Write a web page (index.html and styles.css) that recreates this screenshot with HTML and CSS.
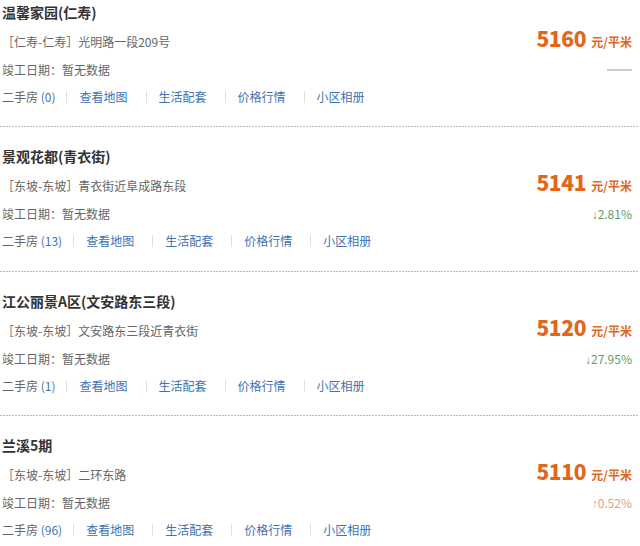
FILE: index.html
```html
<!DOCTYPE html>
<html lang="zh-CN">
<head>
  <meta charset="UTF-8">
  <title>小区列表</title>
  <link rel="stylesheet" href="styles.css">
</head>
<body>
  <div class="list">

    <div class="item">
      <div class="title">温馨家园(仁寿)</div>
      <div class="row addr-row">
        <span class="addr">［仁寿-仁寿］光明路一段209号</span>
        <span class="price"><b>5160</b><em>元/平米</em></span>
      </div>
      <div class="row">
        <span class="date">竣工日期：暂无数据</span>
        <span class="change none"></span>
      </div>
      <div class="links">
        <span class="esf">二手房 <a href="#">(0)</a></span><i class="sep"></i>
        <a href="#">查看地图</a><i class="sep"></i>
        <a href="#">生活配套</a><i class="sep"></i>
        <a href="#">价格行情</a><i class="sep"></i>
        <a href="#">小区相册</a>
      </div>
    </div>

    <div class="item">
      <div class="title">景观花都(青衣街)</div>
      <div class="row addr-row">
        <span class="addr">［东坡-东坡］青衣街近阜成路东段</span>
        <span class="price"><b>5141</b><em>元/平米</em></span>
      </div>
      <div class="row">
        <span class="date">竣工日期：暂无数据</span>
        <span class="change down"><span class="arrow">↓</span>2.81%</span>
      </div>
      <div class="links">
        <span class="esf">二手房 <a href="#">(13)</a></span><i class="sep"></i>
        <a href="#">查看地图</a><i class="sep"></i>
        <a href="#">生活配套</a><i class="sep"></i>
        <a href="#">价格行情</a><i class="sep"></i>
        <a href="#">小区相册</a>
      </div>
    </div>

    <div class="item">
      <div class="title">江公丽景A区(文安路东三段)</div>
      <div class="row addr-row">
        <span class="addr">［东坡-东坡］文安路东三段近青衣街</span>
        <span class="price"><b>5120</b><em>元/平米</em></span>
      </div>
      <div class="row">
        <span class="date">竣工日期：暂无数据</span>
        <span class="change down"><span class="arrow">↓</span>27.95%</span>
      </div>
      <div class="links">
        <span class="esf">二手房 <a href="#">(1)</a></span><i class="sep"></i>
        <a href="#">查看地图</a><i class="sep"></i>
        <a href="#">生活配套</a><i class="sep"></i>
        <a href="#">价格行情</a><i class="sep"></i>
        <a href="#">小区相册</a>
      </div>
    </div>

    <div class="item">
      <div class="title">兰溪5期</div>
      <div class="row addr-row">
        <span class="addr">［东坡-东坡］二环东路</span>
        <span class="price"><b>5110</b><em>元/平米</em></span>
      </div>
      <div class="row">
        <span class="date">竣工日期：暂无数据</span>
        <span class="change up"><span class="arrow">↑</span>0.52%</span>
      </div>
      <div class="links">
        <span class="esf">二手房 <a href="#">(96)</a></span><i class="sep"></i>
        <a href="#">查看地图</a><i class="sep"></i>
        <a href="#">生活配套</a><i class="sep"></i>
        <a href="#">价格行情</a><i class="sep"></i>
        <a href="#">小区相册</a>
      </div>
    </div>

  </div>
</body>
</html>
```

FILE: styles.css
```css
:root {
  --orange: #e2661b;
  --blue: #3f72b0;
  --gray-text: #666;
  --title: #333;
}

body {
  margin: 0;
  font-family: "Noto Sans CJK SC", "Microsoft YaHei", sans-serif;
  font-size: 12px;
  color: var(--gray-text);
  background: #fff;
}

.list {
  margin-top: -17px;
  width: 638px;
}

.item {
  padding: 14px 6px 17px 2px;
  background-image: repeating-linear-gradient(to right, #bbb 0 2px, transparent 2px 3px);
  background-size: 100% 1px;
  background-repeat: no-repeat;
  background-position: left bottom;
}

.item:nth-child(2n) {
  padding-bottom: 18px;
}

.title {
  height: 30px;
  line-height: 30px;
  font-size: 14px;
  font-weight: bold;
  color: var(--title);
}

.row {
  display: flex;
  justify-content: space-between;
  align-items: center;
  height: 27px;
}

.addr-row {
  height: 29px;
}

.price {
  color: var(--orange);
  font-weight: bold;
  white-space: nowrap;
  margin-bottom: 7px;
}

.price b {
  font-size: 21px;
  letter-spacing: -0.3px;
}

.price em {
  font-style: normal;
  font-size: 12px;
  margin-left: 5px;
}

.change {
  font-size: 12px;
}

.change .arrow {
  font-family: "Liberation Sans", sans-serif;
  font-size: 12px;
}

.change.down {
  color: #5e9c6a;
}

.change.up {
  color: #dea27e;
}

.change.none {
  width: 25px;
  height: 2px;
  background: #ccc;
}

.links {
  display: flex;
  align-items: center;
  height: 27px;
}

.links a {
  color: var(--blue);
  text-decoration: none;
}

.links > a {
  padding-right: 7px;
}

.esf {
  color: var(--gray-text);
}

.sep {
  display: inline-block;
  width: 0;
  height: 12px;
  border-left: 1px solid #e0e0e0;
  margin: 0 12px 0 11px;
}
```
